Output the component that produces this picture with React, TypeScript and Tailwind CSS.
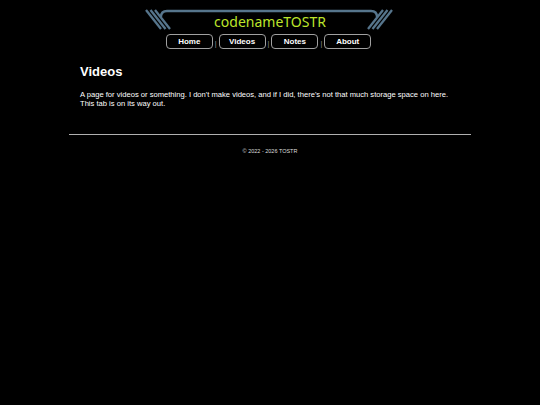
export default function App() {
  const links = ["Home", "Videos", "Notes", "About"];

  return (
    <div className="min-h-screen bg-black font-['Liberation_Sans',Arial,sans-serif] text-white">
      <div className="mx-auto w-[402px] pt-[8px]">
        {/* Header */}
        <header className="flex flex-col items-center pr-[3px]">
          <div className="relative h-[23px] w-[248px]">
            <svg
              className="absolute inset-0"
              width="248"
              height="23"
              viewBox="0 0 248 23"
              fill="none"
              stroke="#56758c"
              strokeWidth="2.3"
              strokeLinecap="butt"
            >
              <path d="M16 9 Q16 3 22 3 L226 3 Q232 3 232 9" />
              <path d="M1 2 L16 21" />
              <path d="M5.5 2 L20.5 21" />
              <path d="M10 2 L25 21" />
              <path d="M247 2 L232 21" />
              <path d="M242.5 2 L227.5 21" />
              <path d="M238 2 L223 21" />
            </svg>
            <div className="relative flex h-full items-end justify-center pb-[2px] pl-[3px] font-['Noto_Sans','DejaVu_Sans',sans-serif] text-[14px] leading-none text-[#bde52b]">
              codenameTOSTR
            </div>
          </div>

          <nav className="mt-[3px] flex items-center gap-[2px]">
            {links.map((l, i) => (
              <div key={l} className="flex items-center gap-[2px]">
                {i > 0 && (
                  <span className="mt-[4px] text-[7px] leading-none text-[#9a9a9a]">|</span>
                )}
                <a
                  href="#"
                  className="flex h-[15px] w-[47px] items-center justify-center rounded-[4px] border border-[#a0a0a0] bg-black text-[8px] font-bold leading-none text-white"
                >
                  {l}
                </a>
              </div>
            ))}
          </nav>
        </header>

        {/* Content */}
        <main className="px-[11px] pt-[16px] pb-[25px]">
          <h1 className="text-[13px] font-bold leading-none">Videos</h1>
          <p className="mt-[12px] text-[7.6px] leading-[9.4px] text-white">
            A page for videos or something. I don't make videos, and if I did, there's not that much storage space on here.
            <br />
            This tab is on its way out.
          </p>
        </main>

        <hr className="border-t border-[#b0b0b0]" />

        <footer className="pt-[12px] text-center text-[5.5px] text-[#dddddd]">
          © 2022 - 2026 TOSTR
        </footer>
      </div>
    </div>
  );
}
